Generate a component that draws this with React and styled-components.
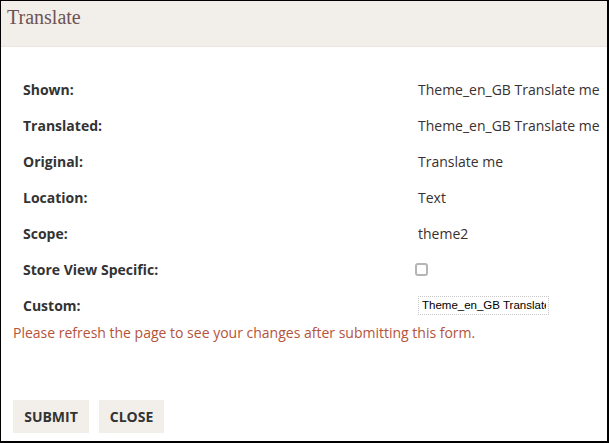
import React from "react";
import styled, { createGlobalStyle } from "styled-components";

const Global = createGlobalStyle`
  html, body { margin: 0; padding: 0; background: #fff; }
  body { font-family: "Open Sans", "Liberation Sans", sans-serif; }
  * { box-sizing: border-box; }
`;

const Frame = styled.div`
  width: 609px;
  height: 443px;
  border-style: solid;
  border-color: #000;
  border-width: 1px 2px 2px 1px;
  overflow: hidden;
  display: flex;
  flex-direction: column;
  background: #fff;
`;

const Header = styled.div`
  height: 46px;
  flex: none;
  background: #f2efea;
  border-bottom: 1px dotted #e2ddd6;
  padding: 4px 0 0 6px;
`;

const Title = styled.h1`
  margin: 0;
  font-family: "Liberation Serif", "Times New Roman", serif;
  font-weight: normal;
  font-size: 20px;
  line-height: 24px;
  color: #6e5252;
`;

const Body = styled.div`
  padding: 24px 0 0 0;
  display: flex;
  flex-direction: column;
`;

const Fields = styled.div`
  display: grid;
  grid-template-columns: 395px 1fr;
  grid-auto-rows: 36px;
  padding-left: 22px;
`;

const Label = styled.div`
  display: flex;
  align-items: center;
  font-size: 14px;
  font-weight: 700;
  color: #333;
  white-space: nowrap;
`;

const Value = styled.div`
  display: flex;
  align-items: center;
  font-size: 14px;
  color: #3a3030;
  white-space: nowrap;
`;

const Check = styled.input.attrs({ type: "checkbox" })`
  appearance: none;
  margin: 0 0 0 -3px;
  width: 13px;
  height: 13px;
  border: 2px solid #b5b5b5;
  border-radius: 3px;
  background: #fff;
`;

const TextInput = styled.input`
  width: 131px;
  height: 19px;
  margin: 0;
  padding: 0 2px 0 3px;
  border: 1px dotted #c8c8c8;
  font-family: "Liberation Sans", Arial, sans-serif;
  font-size: 11.5px;
  color: #000;
  background: #fff;
  outline: none;
`;

const Notice = styled.p`
  margin: 1px 0 0 12px;
  font-size: 14px;
  line-height: 18px;
  color: #b5533a;
`;

const Actions = styled.div`
  display: flex;
  gap: 10px;
  padding: 58px 0 0 12px;
`;

const Button = styled.button`
  height: 33px;
  width: ${(p) => p.$w}px;
  border: none;
  background: #f2efea;
  font-family: "Open Sans", "Liberation Sans", sans-serif;
  font-size: 14px;
  font-weight: 700;
  color: #333;
  padding: 0;
  cursor: pointer;
`;

const rows = [
  ["Shown:", "Theme_en_GB Translate me"],
  ["Translated:", "Theme_en_GB Translate me"],
  ["Original:", "Translate me"],
  ["Location:", "Text"],
  ["Scope:", "theme2"],
];

export default function App() {
  return (
    <>
      <Global />
      <Frame>
        <Header>
          <Title>Translate</Title>
        </Header>
        <Body>
          <Fields>
            {rows.map(([l, v]) => (
              <React.Fragment key={l}>
                <Label>{l}</Label>
                <Value>{v}</Value>
              </React.Fragment>
            ))}
            <Label>Store View Specific:</Label>
            <Value>
              <Check />
            </Value>
            <Label>Custom:</Label>
            <Value>
              <TextInput defaultValue="Theme_en_GB Translate me" />
            </Value>
          </Fields>
          <Notice>Please refresh the page to see your changes after submitting this form.</Notice>
          <Actions>
            <Button $w={76}>SUBMIT</Button>
            <Button $w={65}>CLOSE</Button>
          </Actions>
        </Body>
      </Frame>
    </>
  );
}
